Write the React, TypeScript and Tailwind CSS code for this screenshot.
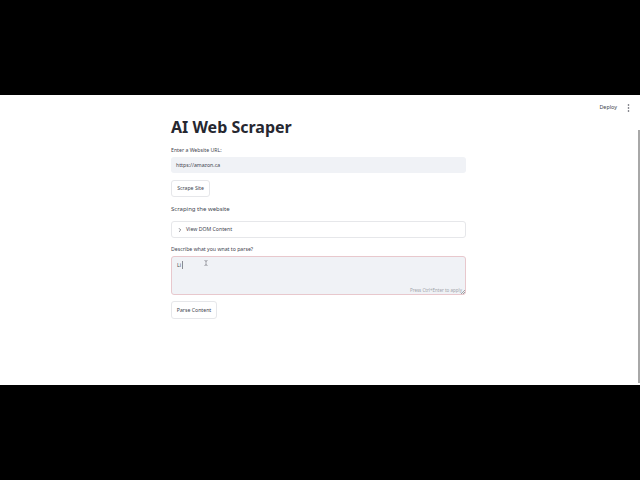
import React from 'react';
import { ChevronRight, TextCursor } from 'lucide-react';

const font = { fontFamily: '"Noto Sans", sans-serif' };

const App = () => {
  return (
    <div className="h-[480px] w-[640px] flex flex-col bg-black overflow-hidden" style={font}>
      <div className="h-[95px] shrink-0 bg-black" />

      <div className="relative h-[290px] shrink-0 bg-white text-[#42444f]">
        {/* Header */}
        <div className="absolute top-[8px] right-[10px] flex items-center gap-[10px]">
          <span className="text-[5.4px] leading-[9px]">Deploy</span>
          <svg width="3" height="8" viewBox="0 0 3 8" fill="#4a4c57">
            <circle cx="1.5" cy="1" r="0.8" />
            <circle cx="1.5" cy="4" r="0.8" />
            <circle cx="1.5" cy="7" r="0.8" />
          </svg>
        </div>

        {/* Scrollbar */}
        <div className="absolute right-0 top-[35px] bottom-[2px] w-[2px] bg-[#a8a8a8]" />

        {/* Main column */}
        <div className="ml-[171px] w-[295px] flex flex-col pt-[21px]">
          <h1 className="text-[16px] leading-[22px] font-bold text-[#262730]">AI Web Scraper</h1>

          <label className="mt-[8px] text-[5.2px] leading-[8px]">Enter a Website URL:</label>
          <div className="mt-[3px] h-[16px] flex items-center rounded-[3px] bg-[#f0f2f6] px-[5px] pt-[1px] text-[5.2px]">
            https://amazon.ca
          </div>

          <button className="mt-[7px] h-[17px] w-[39px] rounded-[3px] border border-[#e6e7ea] bg-white text-[5.2px]">
            Scrape Site
          </button>

          <p className="mt-[8px] text-[6px] leading-[9px]">Scraping the website</p>

          <div className="mt-[7px] h-[17px] flex items-center gap-[3px] rounded-[3px] border border-[#e6e7ea] px-[5px] text-[5.2px]">
            <ChevronRight size={6} strokeWidth={2.5} />
            <span>View DOM Content</span>
          </div>

          <label className="mt-[7px] text-[5.2px] leading-[8px]">Describe what you wnat to parse?</label>
          <div className="relative mt-[3px] h-[39px] rounded-[3px] border border-[#e8c8cd] bg-[#f0f2f6] px-[5px] py-[4px] text-[5.2px] leading-[8px]">
            <span className="border-r border-[#8a8c94] pr-[0.5px]">Li</span>
            <TextCursor size={6} strokeWidth={1.5} className="absolute left-[31px] top-[3px]" />
            <span className="absolute right-[3px] bottom-[1px] text-[4.5px] leading-[6px] text-[#a3a5ab]">
              Press Ctrl+Enter to apply
            </span>
            <svg className="absolute right-0 bottom-0" width="4" height="4" viewBox="0 0 4 4" stroke="#555" strokeWidth="0.5">
              <path d="M0 4L4 0M2 4L4 2" />
            </svg>
          </div>

          <button className="mt-[6px] h-[18px] w-[46px] rounded-[3px] border border-[#e6e7ea] bg-white pt-[1px] text-[5.2px]">
            Parse Content
          </button>
        </div>
      </div>

      <div className="flex-1 bg-black" />
    </div>
  );
};

export default App;
